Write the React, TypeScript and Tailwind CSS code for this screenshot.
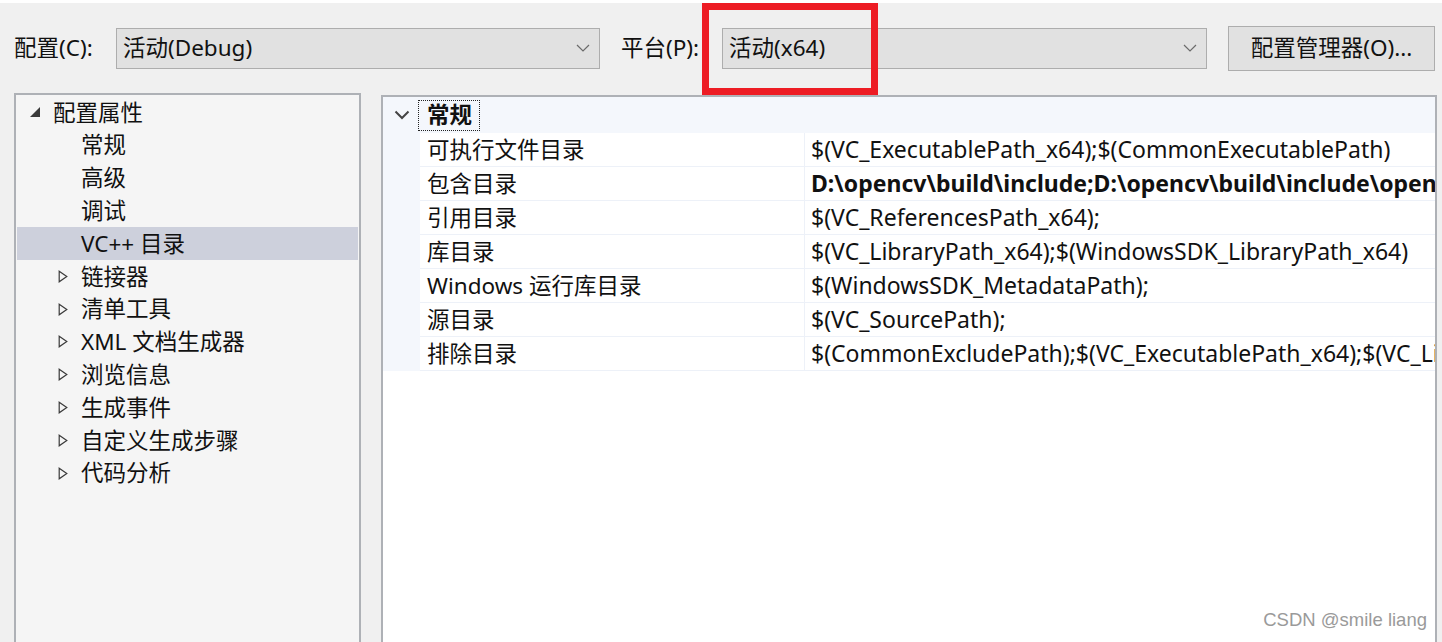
import React from "react";

type TreeItem = { label: string; level: 0 | 1; toggle?: "open" | "closed"; selected?: boolean };

const TREE: TreeItem[] = [
  { label: "配置属性", level: 0, toggle: "open" },
  { label: "常规", level: 1 },
  { label: "高级", level: 1 },
  { label: "调试", level: 1 },
  { label: "VC++ 目录", level: 1, selected: true },
  { label: "链接器", level: 1, toggle: "closed" },
  { label: "清单工具", level: 1, toggle: "closed" },
  { label: "XML 文档生成器", level: 1, toggle: "closed" },
  { label: "浏览信息", level: 1, toggle: "closed" },
  { label: "生成事件", level: 1, toggle: "closed" },
  { label: "自定义生成步骤", level: 1, toggle: "closed" },
  { label: "代码分析", level: 1, toggle: "closed" },
];

// 值列在网格右边被截断，与原图一致
const ROWS: { name: string; value: string; bold?: boolean }[] = [
  { name: "可执行文件目录", value: "$(VC_ExecutablePath_x64);$(CommonExecutablePath)" },
  { name: "包含目录", value: "D:\\opencv\\build\\include;D:\\opencv\\build\\include\\opencv2", bold: true },
  { name: "引用目录", value: "$(VC_ReferencesPath_x64);" },
  { name: "库目录", value: "$(VC_LibraryPath_x64);$(WindowsSDK_LibraryPath_x64)" },
  { name: "Windows 运行库目录", value: "$(WindowsSDK_MetadataPath);" },
  { name: "源目录", value: "$(VC_SourcePath);" },
  { name: "排除目录", value: "$(CommonExcludePath);$(VC_ExecutablePath_x64);$(VC_LibraryPath_x64)" },
];

function ComboChevron() {
  return (
    <svg width="14" height="8" viewBox="0 0 14 8" className="shrink-0">
      <path d="M1 1l6 6 6-6" stroke="#6b6b6b" strokeWidth="1.2" fill="none" />
    </svg>
  );
}

function Combo({ value, width }: { value: string; width: string }) {
  return (
    <div className={`${width} flex h-[41px] items-center justify-between border border-[#adadad] bg-[#e1e1e1] pl-[6px] pr-[9px]`}>
      <span>{value}</span>
      <ComboChevron />
    </div>
  );
}

function TreeRow({ item }: { item: TreeItem }) {
  return (
    <div
      className={`flex h-[32.8px] items-center ${item.level === 0 ? "pl-[12px]" : "pl-[41px]"} ${
        item.selected ? "bg-[#cdd0dc]" : ""
      }`}
    >
      <span className={`flex items-center ${item.level === 0 ? "w-[24px]" : "w-[23px]"}`}>
        {item.toggle === "open" && (
          <svg width="11" height="10" viewBox="0 0 11 10">
            <polygon points="11,0 11,10 1,10" fill="#3a3a3a" />
          </svg>
        )}
        {item.toggle === "closed" && (
          <svg width="10" height="13" viewBox="0 0 10 13">
            <path d="M1.2 1.2L8.8 6.5L1.2 11.8Z" stroke="#3a3a3a" strokeWidth="1.2" fill="none" />
          </svg>
        )}
      </span>
      <span className="whitespace-nowrap">{item.label}</span>
    </div>
  );
}

export default function App() {
  return (
    <div className="relative flex h-[642px] w-[1442px] flex-col overflow-hidden bg-[#f0f0f0] font-[family-name:'Noto_Sans','Noto_Sans_CJK_SC',sans-serif] text-[22.5px] text-[#111]">
      <div className="h-[3px] bg-white" />

      {/* 配置 / 平台 */}
      <div className="flex h-[90px] items-center pl-[14px]">
        <span className="w-[102px] whitespace-nowrap">配置(C):</span>
        <Combo value="活动(Debug)" width="w-[484px]" />
        <span className="w-[122px] whitespace-nowrap pl-[21px]">平台(P):</span>
        <Combo value="活动(x64)" width="w-[485px]" />
        <button
          type="button"
          className="ml-[21px] h-[45px] w-[207px] border border-[#adadad] bg-[#e1e1e1] text-center"
        >
          配置管理器(O)...
        </button>
      </div>

      <div className="flex flex-1 pl-[14px]">
        {/* 左侧树 */}
        <div className="w-[347px] border-2 border-b-0 border-[#aeb1b6] bg-[#f5f5f5] px-px pt-px">
          {TREE.map((item) => (
            <TreeRow key={item.label} item={item} />
          ))}
        </div>

        {/* 属性网格 */}
        <div className="ml-[20px] mt-[2px] w-[1056px] overflow-hidden border-2 border-b-0 border-[#aeb1b6] bg-white">
          <div className="flex h-[36px] items-center bg-[#f4f7fc]">
            <span className="flex w-[37px] justify-center">
              <svg width="16" height="10" viewBox="0 0 16 10">
                <path d="M1.5 1.5l6.5 6.5 6.5-6.5" stroke="#444" strokeWidth="2" fill="none" />
              </svg>
            </span>
            <span className="ml-[-2px] flex h-[31px] w-[62px] items-center border border-dotted border-[#222] pl-[8px] font-bold">
              常规
            </span>
          </div>
          {ROWS.map((row) => (
            <div key={row.name} className="flex h-[34px]">
              <div className="w-[37px] shrink-0 bg-[#f4f7fc]" />
              <div className="flex w-[385px] shrink-0 items-center border-b border-r border-[#edf1f8] pl-[7px] whitespace-nowrap">
                {row.name}
              </div>
              <div
                className={`flex min-w-0 flex-1 items-center overflow-hidden border-b border-[#edf1f8] pl-[6px] text-[23px] whitespace-nowrap ${
                  row.bold ? "font-bold" : ""
                }`}
              >
                {row.value}
              </div>
            </div>
          ))}
        </div>
      </div>

      {/* 标注框 */}
      <div className="absolute left-[702px] top-[3px] h-[92px] w-[176px] border-[7px] border-[#ed1c24]" />

      <span className="absolute bottom-[8px] right-[15px] font-[family-name:'Liberation_Sans',sans-serif] text-[18.5px] text-[#9a9a9a]">
        CSDN @smile liang
      </span>
    </div>
  );
}
